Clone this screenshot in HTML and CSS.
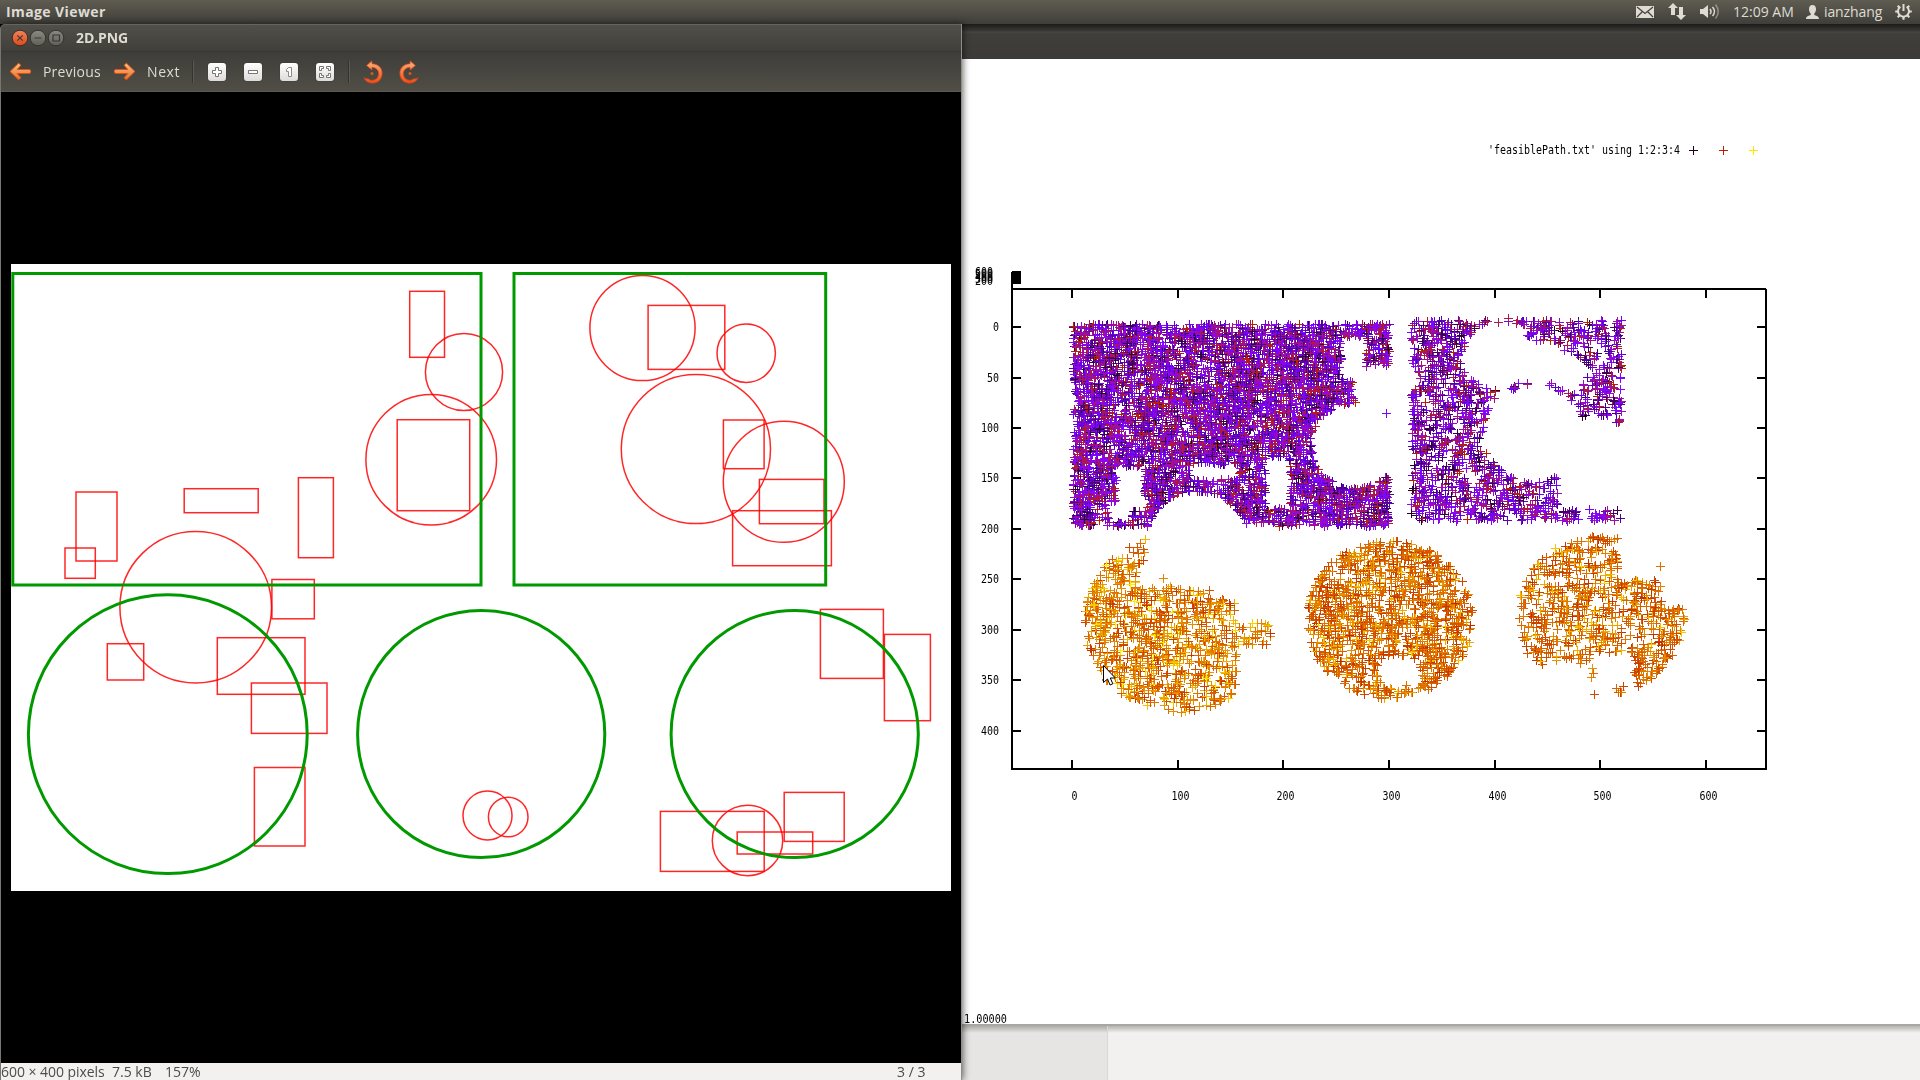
FILE: index.html
```html
<!DOCTYPE html>
<html lang="en">
<head>
<meta charset="utf-8">
<title>Image Viewer</title>
<link rel="stylesheet" href="styles.css">
</head>
<body>
<header class="panel">
  <span class="panel-title">Image Viewer</span>
  <div class="tray">
    <svg class="mail" width="18" height="12" viewBox="0 0 18 12"><path fill="#dfdbd2" d="M0 0h18v12H0z"/><path d="M1 1l8 6.500 8-6.500M1 11l5.500-5.500M17 11l-5.500-5.500" fill="none" stroke="#46453f" stroke-width="1.300"/></svg>
    <svg class="net" width="18" height="17" viewBox="0 0 18 17"><path fill="#dfdbd2" d="M5 0l5 5H7v7H3V5H0zM13 17l-5-5h3V4h4v8h3z"/></svg>
    <svg class="sound" width="20" height="17" viewBox="0 0 20 17"><path fill="#dfdbd2" d="M0 6h3l5-4v13l-5-4H0z"/><g fill="none" stroke="#dfdbd2" stroke-width="1.500"><path d="M10 6q2 2.500 0 5M12.500 4q4 4.500 0 9"/><path d="M15.500 1.500q5.500 7 0 14" opacity=".45"/></g></svg>
    <span class="clock">12:09 AM</span>
    <svg class="user" width="13" height="14" viewBox="0 0 13 14"><path fill="#dfdbd2" d="M6.500 0C9 0 10 1.700 10 4c0 2-.8 3.500-1.700 4.500V10c1.500.7 4.700 1 4.700 4H0c0-3 3.200-3.300 4.700-4V8.500C3.800 7.500 3 6 3 4c0-2.300 1-4 3.500-4z"/></svg>
    <span class="name">ianzhang</span>
    <svg class="gear" width="17" height="17" viewBox="0 0 17 17"><g fill="none" stroke="#dfdbd2"><path stroke-width="2" d="M5.300 3.800a5.500 5.500 0 1 0 6.400 0M8.500 1v7"/><path stroke-width="2.200" d="M.2 8.500H3M14 8.500h2.800M8.500 14v2.800M2.700 2.700l2 2M14.300 2.700l-2 2M2.700 14.300l2-2M14.300 14.300l-2-2"/></g></svg>
  </div>
</header>
<main class="desktop">
  <section class="viewer">
    <div class="titlebar">
      <svg width="54" height="18" viewBox="0 0 54 18">
        <defs>
          <linearGradient id="close" x2="0" y2="1"><stop stop-color="#f4825b"/><stop offset="1" stop-color="#df4a16"/></linearGradient>
          <linearGradient id="grey" x2="0" y2="1"><stop stop-color="#8b8981"/><stop offset="1" stop-color="#605f58"/></linearGradient>
        </defs>
        <g stroke="#33322e"><circle cx="9" cy="9" r="7.800" fill="url(#close)"/><circle cx="27" cy="9" r="7.800" fill="url(#grey)"/><circle cx="45" cy="9" r="7.800" fill="url(#grey)"/></g>
        <path d="M6.300 6.300l5.400 5.400M11.700 6.300l-5.400 5.400M23.500 9h7M42 6h6.500v6H42z" fill="none" stroke="#3a3935" stroke-width="1.200"/>
      </svg>
      <span class="doc">2D.PNG</span>
    </div>
    <div class="toolbar">
      <svg class="prev" width="22" height="19" viewBox="0 0 22 19"><defs><linearGradient id="or" x2="0" y2="1"><stop stop-color="#fbc387"/><stop offset="1" stop-color="#e96a25"/></linearGradient></defs><path d="M9.500 1.200l2.500 2-3.800 4.300H20a2 2 0 0 1 0 4H8.200l3.800 4.300-2.500 2L1 9.500z" fill="url(#or)" stroke="#d9501a" stroke-linejoin="round"/></svg>
      <span class="t-prev">Previous</span>
      <svg class="next" width="22" height="19" viewBox="0 0 22 19"><path d="M12.500 1.200l-2.500 2 3.800 4.300H2a2 2 0 0 0 0 4h11.800L10 15.800l2.500 2L21 9.500z" fill="url(#or)" stroke="#d9501a" stroke-linejoin="round"/></svg>
      <span class="t-next">Next</span>
      <i class="sep"></i>
      <span class="btn"><svg width="18" height="18" viewBox="0 0 18 18"><path d="M7.500 4.500h3v3h3v3h-3v3h-3v-3h-3v-3h3z" fill="#fff" stroke="#77756f"/></svg></span>
      <span class="btn"><svg width="18" height="18" viewBox="0 0 18 18"><path d="M4.500 7.500h9v3h-9z" fill="#fff" stroke="#77756f"/></svg></span>
      <span class="btn"><svg width="18" height="18" viewBox="0 0 18 18"><path d="M8.500 4.500h3v9h-3v-5h-2v-2z" fill="#fff" stroke="#8c8a84"/></svg></span>
      <span class="btn"><svg width="18" height="18" viewBox="0 0 18 18"><path d="M3.500 3.500h4v2h-2v2h-2zM14.500 3.500h-4v2h2v2h2zM3.500 14.500h4v-2h-2v-2h-2zM14.500 14.500h-4v-2h2v-2h2z" fill="#fff" stroke="#77756f"/></svg></span>
      <i class="sep two"></i>
      <svg class="ccw" width="20" height="24" viewBox="0 0 20 24"><defs><linearGradient id="rot" x2="0" y2="1"><stop stop-color="#f9b27c"/><stop offset="1" stop-color="#f04c16"/></linearGradient></defs><path d="M3.500 5.500L9 .8v2.900c6.500.2 10.200 4.300 10.200 9.500 0 6-4.200 10-9.700 10-4.200 0-7.300-2-8.700-5.700 1.700 1.300 3 1.600 4.400 1.200 1.200 1 2.600 1.500 4.100 1.500 3.800 0 6.200-2.900 6.200-6.600 0-3.300-2.200-6-6.500-6.200V10.200z" fill="url(#rot)" stroke="#c84314" stroke-width=".8"/><circle cx="9" cy="13.500" r="1.500" fill="#e8501c"/></svg>
      <svg class="cw" width="20" height="24" viewBox="0 0 20 24"><path transform="matrix(-1 0 0 1 20 0)" d="M3.500 5.500L9 .8v2.900c6.500.2 10.200 4.300 10.200 9.500 0 6-4.200 10-9.700 10-4.200 0-7.300-2-8.700-5.700 1.700 1.300 3 1.600 4.400 1.200 1.200 1 2.600 1.500 4.100 1.500 3.800 0 6.200-2.900 6.200-6.600 0-3.300-2.200-6-6.500-6.200V10.200z" fill="url(#rot)" stroke="#c84314" stroke-width=".8"/><circle cx="11" cy="13.500" r="1.500" fill="#e8501c"/></svg>
    </div>
    <div class="canvas-area">
      <svg class="picture" width="940" height="627" viewBox="11 264 940 627">
        <g id="obstacles" class="red">
          <rect x="409.700" y="291.300" width="34.800" height="66"/>
          <circle cx="464" cy="372" r="38.600"/>
          <circle cx="431.200" cy="459.700" r="65.300"/>
          <rect x="397.200" y="419.700" width="72.500" height="91"/>
          <rect x="298.400" y="477.700" width="35" height="80"/>
          <rect x="184.200" y="488.700" width="74" height="24"/>
          <rect x="76" y="492" width="41" height="69"/>
          <rect x="65" y="548" width="30.300" height="30.300"/>
          <circle cx="195.700" cy="607.200" r="75.800"/>
          <rect x="271.900" y="579.500" width="42.400" height="39.300"/>
          <rect x="107.300" y="643.700" width="36.400" height="36.300"/>
          <rect x="217.300" y="637.700" width="87.700" height="56.600"/>
          <rect x="251.400" y="683" width="75.600" height="50.400"/>
          <rect x="254.400" y="767.500" width="50.600" height="78.500"/>
          <circle cx="487.500" cy="815.500" r="24.500"/>
          <circle cx="508.200" cy="817" r="19.800"/>
          <rect x="820.400" y="609.400" width="63" height="69"/>
          <rect x="884.400" y="634.400" width="46" height="86.300"/>
          <rect x="784.200" y="792.400" width="60" height="49"/>
          <rect x="660.400" y="811.400" width="103.800" height="60"/>
          <rect x="737.200" y="832" width="75.500" height="22"/>
          <circle cx="747.500" cy="840.500" r="35.200"/>
          <circle cx="642.500" cy="328" r="52.600"/>
          <rect x="648.100" y="305.400" width="76.700" height="64"/>
          <circle cx="746.200" cy="353.200" r="29.200"/>
          <circle cx="695.900" cy="449" r="74.600"/>
          <rect x="723.400" y="420" width="40.700" height="48.700"/>
          <circle cx="783.800" cy="481.800" r="60.500"/>
          <rect x="759.400" y="479.400" width="64.600" height="44.300"/>
          <rect x="732.600" y="510.700" width="98.800" height="55"/>
        </g>
        <g class="green">
          <rect x="12.800" y="273.500" width="468.200" height="311.500"/>
          <rect x="514" y="273.500" width="311.700" height="311.500"/>
          <circle cx="167.800" cy="734.200" r="139.400"/>
          <circle cx="481.200" cy="734" r="123.600"/>
          <circle cx="794.700" cy="734" r="123.600"/>
        </g>
      </svg>
    </div>
    <div class="status"><span class="s1">600 × 400 pixels</span><span class="s2">7.5 kB</span><span class="s3">157%</span><span class="s4">3 / 3</span></div>
  </section>
  <section class="plot">
    <div class="plot-title"></div>
    <div class="plot-body">
      <canvas id="points" width="959" height="965"></canvas>
      <svg class="axes" width="959" height="965" viewBox="961 59 959 965">
        <g id="frame" shape-rendering="crispEdges" fill="none" stroke="#000" stroke-width="2">
          <path d="M1012 272v497M1011 289h755M1766 289v480M1011 769h756"/>
        </g>
        <path d="M1012 271h9v13h-9z"/>
        <g shape-rendering="crispEdges" fill="none"><path stroke="#200018" d="M1689 150.500h9M1693.500 146v9"/><path stroke="#b42000" d="M1719 150.500h9M1723.500 146v9"/><path stroke="#fbe600" d="M1749 150.500h9M1753.500 146v9"/></g>
        <g id="labels"><text x="1488" y="154" textLength="192" lengthAdjust="spacingAndGlyphs">'feasiblePath.txt' using 1:2:3:4</text></g>
        <text x="964" y="1023" textLength="43" lengthAdjust="spacingAndGlyphs">1.00000</text>
        <path d="M1103.500 665.500v17l4-3.500 2.500 6 2.800-1.200-2.500-5.800h5z" fill="#fff" stroke="#000"/>
      </svg>
    </div>
    <div class="plot-foot"><div class="foot-cell"></div></div>
  </section>
</main>
<script src="plot.js"></script>
</body>
</html>
```
FILE: styles.css
```css
* { box-sizing: border-box; }
body { margin: 0; width: 1920px; height: 1080px; overflow: hidden; background: #000; display: flex; flex-direction: column; font: 14px "Open Sans", "Noto Sans", sans-serif; color: #dfdbd2; }
svg { display: block; flex: none; }
span { white-space: nowrap; }
.panel { height: 24px; display: flex; align-items: center; justify-content: space-between; padding: 0 8px 1px 6px; background: linear-gradient(#5f5d52, #3f3e39); }
.panel-title { font-weight: 700; letter-spacing: .4px; }
.tray { display: flex; align-items: center; }
.net { margin-left: 14px; }
.sound { margin-left: 14px; }
.clock { margin-left: 13px; width: 61px; }
.user { margin-left: 12px; }
.name { margin-left: 5px; width: 60px; letter-spacing: -.1px; }
.gear { margin-left: 11px; }
.desktop { flex: 1; display: flex; min-height: 0; }
.viewer { width: 961px; display: flex; flex-direction: column; border-left: 1px solid #77756f; position: relative; z-index: 1; box-shadow: 1px 0 0 #8f8e8b, 2px 0 7px rgba(0,0,0,.6); background: #3c3b37; border-top-left-radius: 5px; }
.titlebar { height: 28px; display: flex; align-items: center; padding: 0 0 0 10px; border-top: 1px solid #66645d; border-bottom: 1px solid #383733; background: linear-gradient(#504f49, #403f3a); border-top-left-radius: 5px; }
.doc { margin: -1px 0 0 11px; font-weight: 700; letter-spacing: -.1px; }
.toolbar { height: 40px; display: flex; align-items: center; padding-left: 8px; background: linear-gradient(#3e3d39, #504e46); border-bottom: 1px solid #5a584f; }
.t-prev { margin-left: 12px; width: 60px; letter-spacing: .2px; }
.next { margin-left: 11px; }
.t-next { margin-left: 11px; width: 35px; letter-spacing: .6px; }
.sep { width: 2px; height: 22px; margin: 0 14px 0 10px; border-left: 1px solid #34332f; border-right: 1px solid #5b5a54; }
.sep.two { margin: 0 13px 0 -4px; }
.btn { width: 18px; height: 18px; margin-right: 18px; border-radius: 3px; background: linear-gradient(#fff, #dddcda); box-shadow: 0 0 1px #22211f; }
.cw { margin-left: 16px; }
.canvas-area { flex: 1; background: #000; padding: 172px 0 0 10px; }
.picture { background: #fff; }
.red { fill: none; stroke: #f00; stroke-opacity: .85; stroke-width: 1.5px; }
.green { fill: none; stroke: #090; stroke-width: 3px; }
.status { height: 17px; display: flex; align-items: center; background: #f2f1f0; color: #4c4c4c; line-height: 17px; font-size: 14px; }
.s1 { width: 111px; letter-spacing: -.05px; }
.s2 { width: 53px; }
.s3 { width: 732px; }
.plot { width: 959px; display: flex; flex-direction: column; background: #fff; }
.plot-title { height: 35px; background: linear-gradient(#1c1b19 0, #3a3935 7px, #474640 8px, #3f3e3a 10px, #3c3b37 100%); }
.plot-body { height: 965px; display: grid; }
.plot-body > * { grid-area: 1 / 1; }
.axes text { font: 12px "DejaVu Sans Mono", monospace; fill: #000; }
.plot-foot { flex: 1; background: linear-gradient(rgba(0,0,0,.25), rgba(0,0,0,0) 7px), #f2f1f0; border-top: 2px solid #aaa7a0; }
.foot-cell { width: 147px; height: 100%; background: linear-gradient(rgba(0,0,0,.25), rgba(0,0,0,0) 7px), #e6e5e3; border-right: 1px solid #d8d7d5; }
```
FILE: plot.js
```js
const ctx = document.getElementById('points').getContext('2d');
const NS = 'http://www.w3.org/2000/svg';
let seed = 20117;
function rand() {
  seed = (seed * 1664525 + 1013904223) % 4294967296;
  return seed / 4294967296;
}

const obstacles = [...document.querySelectorAll('#obstacles > *')].map(el => {
  const n = k => parseFloat(el.getAttribute(k));
  return el.tagName === 'circle'
    ? (x, y) => Math.hypot(x - n('cx'), y - n('cy')) < n('r')
    : (x, y) => x > n('x') && x < n('x') + n('width') && y > n('y') && y < n('y') + n('height');
});

const regions = [
  { box: [12, 271, 481, 585], shift: -8, count: 7200, lo: 0.02, hi: 0.52 },
  { box: [514, 273, 826, 585], shift: -13, count: 2500, lo: 0.02, hi: 0.52 },
  { disc: [167.8, 734.2, 139.4], shift: -7, count: 1800, lo: 0.56, hi: 1 },
  { disc: [481.2, 734, 123.6], shift: -11, count: 1750, lo: 0.54, hi: 0.95 },
  { disc: [794.7, 734, 123.6], shift: -15, count: 1250, lo: 0.54, hi: 0.95 }
];

function colour(t) {
  const c = v => Math.round(255 * Math.max(0, v));
  return `rgb(${c(Math.sqrt(t))},${c(t ** 3)},${c(Math.sin(2 * Math.PI * t))})`;
}

function cross(px, py) {
  ctx.fillRect(px - 4, py, 9, 1);
  ctx.fillRect(px, py - 4, 1, 9);
}

for (const r of regions) {
  const b = r.box || [r.disc[0] - r.disc[2], r.disc[1] - r.disc[2], r.disc[0] + r.disc[2], r.disc[1] + r.disc[2]];
  for (let i = 0; i < r.count; i++) {
    const x = b[0] + rand() * (b[2] - b[0]);
    const y = b[1] + rand() * (b[3] - b[1]);
    const mix = r.disc ? (rand() + rand()) / 2 : rand();
    if (r.disc && Math.hypot(x - r.disc[0], y - r.disc[1]) > r.disc[2]) continue;
    if (obstacles.some(hit => hit(x, y))) continue;
    if (r.box && x > 470 && x < 482 && y > 370 && y < 420) continue;
    const px = Math.round(1072 + (x - 11) / 1.567 * 1.0567) - 961;
    const py = Math.round(327 + r.shift + (y - 264) / 1.567 * 1.01) - 59;
    ctx.fillStyle = colour(r.lo + mix * (r.hi - r.lo));
    cross(px, py);
  }
}
ctx.fillStyle = '#7d04ff';
cross(425, 354);
ctx.fillStyle = colour(0.45);
[[1466, 323], [1487, 321], [1498, 322], [1508, 318], [1516, 323]].forEach(([x, y]) => cross(x - 961, y - 59));
ctx.fillStyle = colour(0.76);
cross(1660 - 961, 566 - 59);

const labels = document.getElementById('labels');
function label(value, centre, baseline) {
  const t = document.createElementNS(NS, 'text');
  const width = String(value).length * 6;
  t.setAttribute('x', centre - width / 2);
  t.setAttribute('y', baseline);
  t.setAttribute('textLength', width);
  t.setAttribute('lengthAdjust', 'spacingAndGlyphs');
  t.textContent = value;
  labels.append(t);
}
let ticks = '';
[1072, 1178, 1283, 1389, 1495, 1600, 1706].forEach((x, i) => {
  ticks += `M${x} 289v9M${x} 760v9`;
  label(i * 100, x + 2.5, 800);
});
[327, 378, 428, 478, 529, 579, 630, 680, 731].forEach((y, i) => {
  ticks += `M1012 ${y}h9M1757 ${y}h9`;
  label(i * 50, 999 - String(i * 50).length * 3, y + 4);
});
[600, 500, 400, 300, 200].forEach((v, i) => label(v, 984, 276 + i * 2.3));
const path = document.createElementNS(NS, 'path');
path.setAttribute('d', ticks);
document.getElementById('frame').append(path);
```
